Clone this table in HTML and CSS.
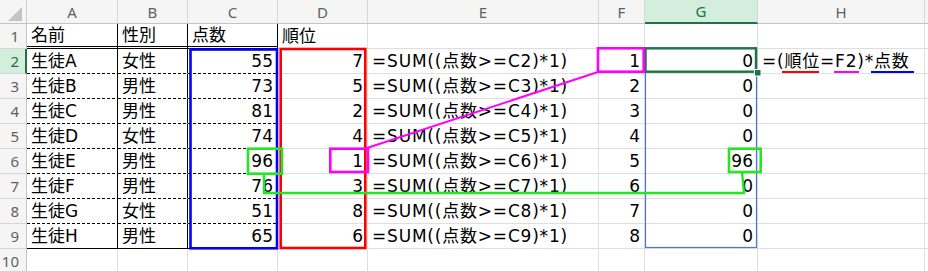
FILE: index.html
```html
<!DOCTYPE html>
<html lang="ja">
<head>
<meta charset="utf-8">
<title>順位の計算</title>
<link rel="stylesheet" href="styles.css">
</head>
<body>
<div class="sheet">
  <div class="grid">
    <div class="corner"><svg width="26" height="23" viewBox="0 0 26 23"><polygon points="8,21 22,21 22,7" fill="#c4c4c4"/></svg></div>
    <div class="ch">A</div><div class="ch">B</div><div class="ch">C</div><div class="ch">D</div><div class="ch">E</div><div class="ch">F</div><div class="ch sel">G</div><div class="ch">H</div><div class="ch"></div>

    <div class="rh">1</div>
    <div class="c tb hd">名前</div><div class="c tb hd">性別</div><div class="c tb hd">点数</div><div class="c">順位</div><div class="c"></div><div class="c"></div><div class="c"></div><div class="c"></div><div class="c"></div>

    <div class="rh rsel">2</div>
    <div class="c tb dt">生徒A</div><div class="c tb dt">女性</div><div class="c tb dt n">55</div><div class="c n">7</div><div class="c f">=SUM((点数&gt;=C2)*1)</div><div class="c n">1</div><div class="c n">0</div><div class="c f">=(順位=F2)*点数</div><div class="c"></div>

    <div class="rh">3</div>
    <div class="c tb dt">生徒B</div><div class="c tb dt">男性</div><div class="c tb dt n">73</div><div class="c n">5</div><div class="c f">=SUM((点数&gt;=C3)*1)</div><div class="c n">2</div><div class="c n">0</div><div class="c"></div><div class="c"></div>

    <div class="rh">4</div>
    <div class="c tb dt">生徒C</div><div class="c tb dt">男性</div><div class="c tb dt n">81</div><div class="c n">2</div><div class="c f">=SUM((点数&gt;=C4)*1)</div><div class="c n">3</div><div class="c n">0</div><div class="c"></div><div class="c"></div>

    <div class="rh">5</div>
    <div class="c tb dt">生徒D</div><div class="c tb dt">女性</div><div class="c tb dt n">74</div><div class="c n">4</div><div class="c f">=SUM((点数&gt;=C5)*1)</div><div class="c n">4</div><div class="c n">0</div><div class="c"></div><div class="c"></div>

    <div class="rh">6</div>
    <div class="c tb dt">生徒E</div><div class="c tb dt">男性</div><div class="c tb dt n">96</div><div class="c n">1</div><div class="c f">=SUM((点数&gt;=C6)*1)</div><div class="c n">5</div><div class="c n">96</div><div class="c"></div><div class="c"></div>

    <div class="rh">7</div>
    <div class="c tb dt">生徒F</div><div class="c tb dt">男性</div><div class="c tb dt n">76</div><div class="c n">3</div><div class="c f">=SUM((点数&gt;=C7)*1)</div><div class="c n">6</div><div class="c n">0</div><div class="c"></div><div class="c"></div>

    <div class="rh">8</div>
    <div class="c tb dt">生徒G</div><div class="c tb dt">女性</div><div class="c tb dt n">51</div><div class="c n">8</div><div class="c f">=SUM((点数&gt;=C8)*1)</div><div class="c n">7</div><div class="c n">0</div><div class="c"></div><div class="c"></div>

    <div class="rh">9</div>
    <div class="c tb sb">生徒H</div><div class="c tb sb">男性</div><div class="c tb sb n">65</div><div class="c n">6</div><div class="c f">=SUM((点数&gt;=C9)*1)</div><div class="c n">8</div><div class="c n">0</div><div class="c"></div><div class="c"></div>

    <div class="rh">10</div>
    <div class="c"></div><div class="c"></div><div class="c"></div><div class="c"></div><div class="c"></div><div class="c"></div><div class="c"></div><div class="c"></div><div class="c"></div>
  </div>

  <svg class="marks" width="928" height="271" viewBox="0 0 928 271">
    <rect x="645.5" y="48.5" width="111" height="199" fill="none" stroke="#4a78cf" stroke-width="1.2"/>
    <rect x="645.5" y="48.3" width="110.5" height="23.4" fill="none" stroke="#217346" stroke-width="2.4"/>
    <rect x="754.5" y="69.5" width="6.5" height="6.5" fill="#217346" stroke="#ffffff" stroke-width="1"/>
    <rect x="190.5" y="49.5" width="86.5" height="198.8" fill="none" stroke="#0000ff" stroke-width="2.6"/>
    <rect x="280.7" y="49" width="84.6" height="199" fill="none" stroke="#ff0000" stroke-width="2.6"/>
    <rect x="598" y="48.3" width="45.7" height="23.4" fill="none" stroke="#ff00ff" stroke-width="2.6"/>
    <rect x="330.3" y="148.7" width="37.7" height="23.3" fill="none" stroke="#ff00ff" stroke-width="2.6"/>
    <line x1="367" y1="148" x2="598" y2="72" stroke="#ff00ff" stroke-width="2"/>
    <rect x="248" y="148.7" width="34" height="25" fill="none" stroke="#22e822" stroke-width="2.6"/>
    <rect x="729" y="148.7" width="31.7" height="23.3" fill="none" stroke="#22e822" stroke-width="2.6"/>
    <polyline points="264,174 264,193 744,193 742,172" fill="none" stroke="#22e822" stroke-width="2.4"/>
    <line x1="782" y1="72" x2="819" y2="72" stroke="#ff0000" stroke-width="2"/>
    <line x1="834" y1="72" x2="859" y2="72" stroke="#ff00ff" stroke-width="2"/>
    <line x1="871" y1="72" x2="914" y2="72" stroke="#0000ff" stroke-width="2"/>
  </svg>
</div>
</body>
</html>
```

FILE: styles.css
```css
* { box-sizing: border-box; }

html, body {
  margin: 0;
  padding: 0;
  background: #ffffff;
}

.sheet {
  position: relative;
  width: 928px;
  height: 271px;
  overflow: hidden;
}

.grid {
  display: grid;
  grid-template-columns: 27px 91px 70px 90px 90px 231px 46px 113px 167px 1fr;
  grid-template-rows: 24px repeat(10, 25px);
  font-family: "DejaVu Sans", "Noto Sans CJK JP", sans-serif;
  font-size: 17px;
  color: #000;
}

.corner {
  background: #f5f5f5;
  border-right: 1px solid #d0d0d0;
  border-bottom: 1px solid #c4c4c4;
}
.corner svg { display: block; }

.ch {
  display: flex;
  align-items: center;
  justify-content: center;
  background: #f5f5f5;
  border-right: 1px solid #d6d6d6;
  border-bottom: 1px solid #c4c4c4;
  color: #616161;
  font-family: "Noto Sans", sans-serif;
  font-size: 15px;
}
.ch.sel {
  background: #d3eedd;
  color: #217346;
  border-bottom: 2px solid #217346;
}

.rh {
  display: flex;
  align-items: center;
  justify-content: flex-end;
  padding-right: 7px;
  background: #f5f5f5;
  border-right: 1px solid #c4c4c4;
  border-bottom: 1px solid #d6d6d6;
  color: #616161;
  font-family: "Noto Sans", sans-serif;
  font-size: 15px;
}
.rh.rsel {
  background: #d3eedd;
  color: #217346;
  border-right: 2px solid #217346;
  padding-right: 6px;
}

.c {
  display: flex;
  align-items: center;
  padding: 0 4px;
  border-right: 1px solid #dedede;
  border-bottom: 1px solid #dedede;
  white-space: nowrap;
  overflow: visible;
  line-height: 24px;
}

.n { justify-content: flex-end; }

.f { letter-spacing: 0.8px; }

.tb { border-right-color: #000; }

.hd { border-bottom: 3px double #000; }

.dt {
  border-bottom-color: transparent;
  background-image: repeating-linear-gradient(90deg, #000 0 3px, transparent 3px 5px);
  background-origin: border-box;
  background-position: left bottom;
  background-size: 100% 1px;
  background-repeat: no-repeat;
}

.sb { border-bottom-color: #000; }

.marks {
  position: absolute;
  left: 0;
  top: 0;
  pointer-events: none;
}
```
